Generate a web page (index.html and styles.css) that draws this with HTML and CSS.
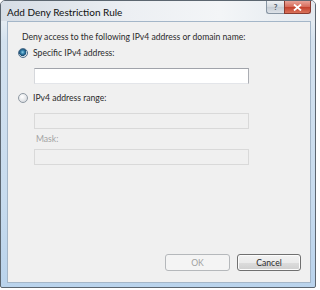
FILE: index.html
```html
<!DOCTYPE html>
<html lang="en">
<head>
  <meta charset="UTF-8">
  <title>Add Deny Restriction Rule</title>
  <link rel="stylesheet" href="styles.css">
</head>
<body>
  <div class="window">
    <div class="titlebar">
      <span class="title">Add Deny Restriction Rule</span>
      <div class="caption-buttons">
        <span class="cap-btn help">?</span>
        <span class="cap-btn close">
          <svg width="9" height="7" viewBox="0 0 9 7">
            <path d="M1 0.5 L8 6.5 M8 0.5 L1 6.5" stroke="#fff" stroke-width="1.8" fill="none"/>
          </svg>
        </span>
      </div>
    </div>

    <div class="client">
      <p class="intro">Deny access to the following IPv4 address or domain name:</p>

      <div class="option">
        <span class="radio checked"></span>
        <span>Specific IPv4 address:</span>
      </div>
      <div class="textbox"></div>

      <div class="option option-range">
        <span class="radio"></span>
        <span>IPv4 address range:</span>
      </div>
      <div class="textbox disabled"></div>

      <div class="field-label disabled-text">Mask:</div>
      <div class="textbox disabled mask-box"></div>

      <div class="buttons">
        <button class="btn" disabled>OK</button>
        <button class="btn">Cancel</button>
      </div>
    </div>
  </div>
</body>
</html>
```

FILE: styles.css
```css
body {
  margin: 0;
  background: #fff;
  font-family: Lato, "Open Sans", sans-serif;
  font-size: 8.6px;
  color: #2a2a2a;
}

.window {
  width: 316px;
  height: 288px;
  box-sizing: border-box;
  display: flex;
  flex-direction: column;
  border: 1px solid #5c6670;
  border-radius: 5px 5px 2px 2px;
  background: linear-gradient(#dde3ea 0px, #eef1f4 10px, #d4e2ef 40px, #c7dbee 200px, #b9d3ec 288px);
}

.titlebar {
  height: 20px;
  display: flex;
  align-items: flex-start;
  justify-content: space-between;
  background: linear-gradient(90deg, #d6dde5 0%, #eceff3 40%, #f3f5f7 70%, #e3e9ef 100%);
  border-radius: 4px 4px 0 0;
}

.title {
  padding: 5px 0 0 6px;
  font-size: 10px;
  color: #101010;
}

.caption-buttons {
  display: flex;
  margin-right: 4px;
}

.cap-btn {
  height: 13px;
  display: flex;
  align-items: center;
  justify-content: center;
  border: 1px solid #8795a3;
  border-top: none;
  box-sizing: border-box;
}

.help {
  width: 18px;
  border-radius: 0 0 0 3px;
  border-right: none;
  background: linear-gradient(#eef1f4, #d3d9df 50%, #c5ccd4 51%, #dde2e8);
  font-size: 8px;
  font-weight: bold;
  color: #4e5a66;
}

.close {
  width: 27px;
  border-radius: 0 0 3px 0;
  border-color: #8a3b30;
  background: linear-gradient(#e8a398, #d66a58 50%, #c3402c 51%, #d9725a);
}

.client {
  flex: 1;
  margin: 0 4px 4px 6px;
  display: flex;
  flex-direction: column;
  padding-left: 10px;
  background: #f0f0f0;
  border: 1px solid #a4b6c8;
}

.intro {
  margin: 8px 0 0 4px;
  line-height: 14px;
}

.option {
  display: flex;
  align-items: center;
  gap: 5px;
  height: 14px;
  margin-top: 2px;
}

.option-range {
  margin-top: 7px;
}

.radio {
  width: 10px;
  height: 10px;
  box-sizing: border-box;
  border-radius: 50%;
  border: 1px solid #8f99a3;
  background: radial-gradient(circle at 40% 35%, #ffffff, #dcdfe3 70%);
}

.radio.checked {
  border-color: #4f6f8c;
  background: radial-gradient(circle at 45% 40%, #8fd0e8 0px, #2e7aa6 2px, #1d4f73 3.5px, #dfe7ee 4px, #cfd8e0 5px);
}

.textbox {
  width: 215px;
  height: 16px;
  margin: 8px 0 0 16px;
  box-sizing: border-box;
  background: #fff;
  border: 1px solid #abadb3;
  border-top-color: #a0a3aa;
  border-left-color: #d6d8dc;
  border-bottom-color: #e3e5e9;
}

.textbox.disabled {
  background: #f0f0f0;
  border: 1px solid #d9d9d9;
}

.field-label {
  margin: 3px 0 0 18px;
  line-height: 14px;
}

.disabled-text {
  color: #a3a3a3;
}

.textbox.mask-box {
  margin-top: 3px;
}

.buttons {
  margin-top: auto;
  padding: 0 9px 11px 0;
  display: flex;
  justify-content: flex-end;
  gap: 7px;
}

.btn {
  width: 65px;
  height: 17px;
  padding: 0;
  font-family: inherit;
  font-size: 8.6px;
  color: #2a2a2a;
  border: 1px solid #707070;
  border-radius: 3px;
  background: linear-gradient(#f2f2f2, #ebebeb 50%, #dddddd 51%, #cfcfcf);
  box-shadow: inset 0 0 0 1px #fcfcfc;
}

.btn:disabled {
  color: #a0a0a0;
  border-color: #b5b8bb;
  background: #f4f4f4;
  box-shadow: none;
}

.btn + .btn {
  width: 64px;
}
```
